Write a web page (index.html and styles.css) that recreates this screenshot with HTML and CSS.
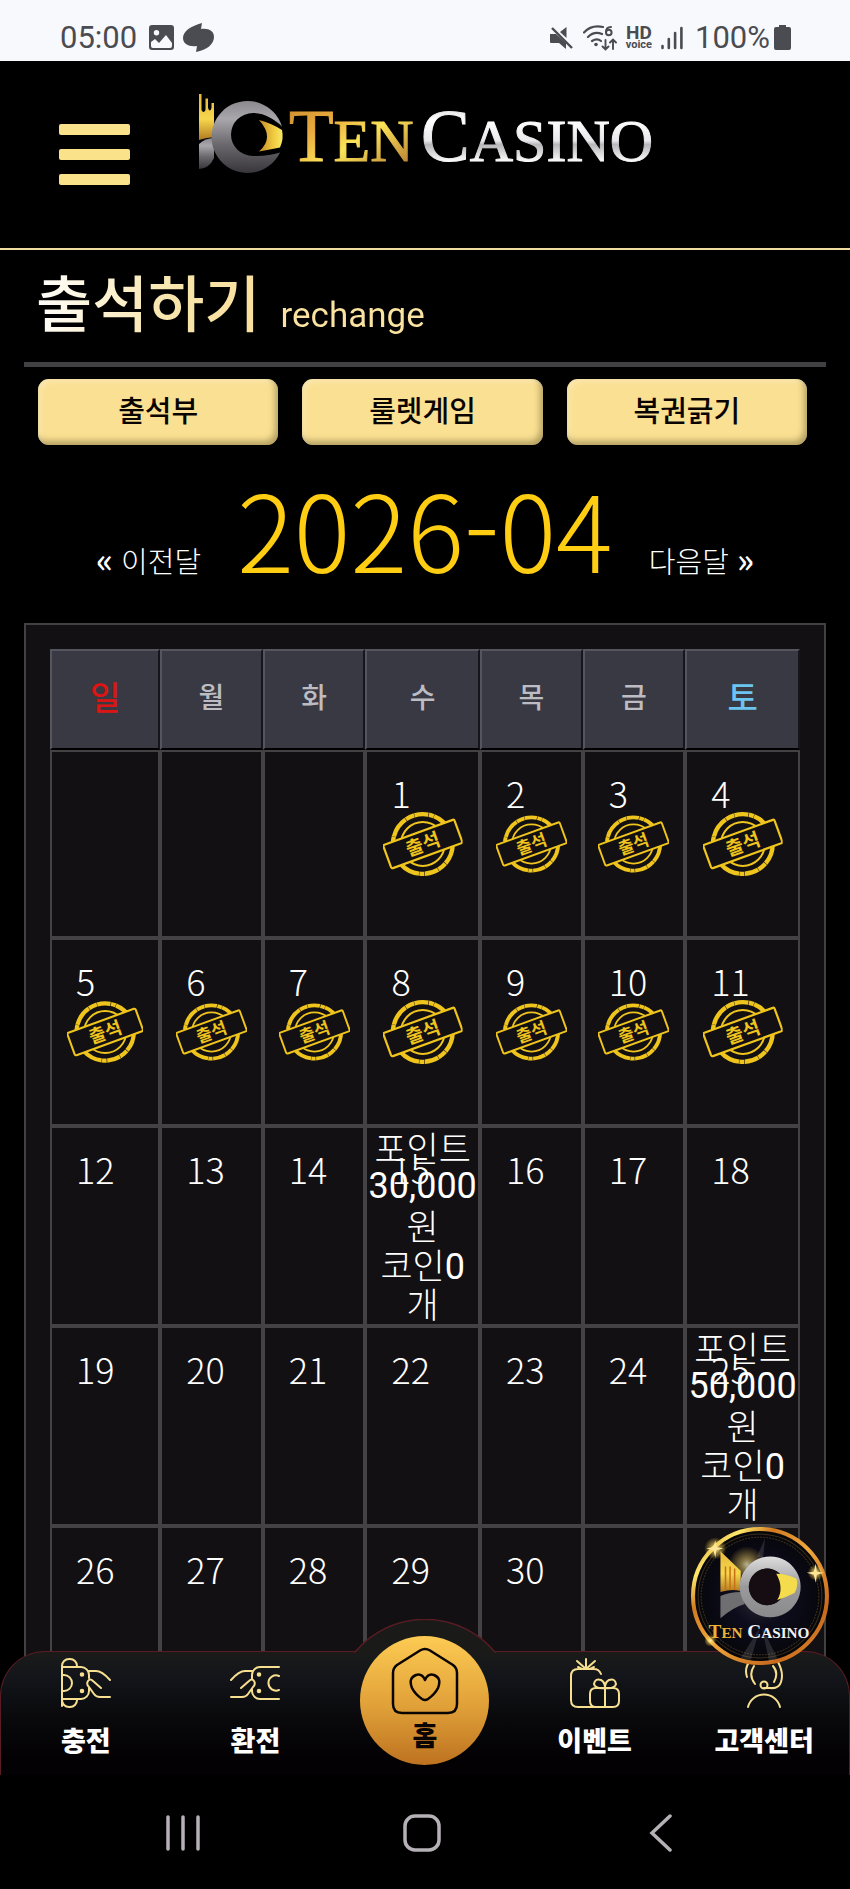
FILE: index.html
```html
<!DOCTYPE html>
<html lang="ko">
<head>
<meta charset="utf-8">
<meta name="viewport" content="width=device-width, initial-scale=1">
<title>출석하기 - Ten Casino</title>
<link rel="stylesheet" href="styles.css">
</head>
<body>
<svg class="defs" aria-hidden="true">
  <defs>
    <linearGradient id="gold" x1="0" y1="0" x2="1" y2="1">
      <stop offset="0" stop-color="#c98a2c"/><stop offset=".3" stop-color="#e9a93c"/><stop offset=".55" stop-color="#fbe458"/><stop offset="1" stop-color="#a8642a"/>
    </linearGradient>
    <linearGradient id="goldHand" x1="0" y1="0" x2="0" y2="1">
      <stop offset="0" stop-color="#e8b83c"/><stop offset=".55" stop-color="#f6d64c"/><stop offset="1" stop-color="#b07a22"/>
    </linearGradient>
    <linearGradient id="goldEye" x1="0" y1="0" x2="1" y2="0">
      <stop offset="0" stop-color="#c48a26"/><stop offset=".6" stop-color="#f0c840"/><stop offset="1" stop-color="#f8ea62"/>
    </linearGradient>
    <linearGradient id="silver" x1="0" y1="0" x2="0" y2="1">
      <stop offset="0" stop-color="#8b898d"/><stop offset=".25" stop-color="#a9a7ab"/><stop offset=".6" stop-color="#6b696e"/><stop offset="1" stop-color="#38363b"/>
    </linearGradient>
    <linearGradient id="steel" x1="0" y1="0" x2="0" y2="1">
      <stop offset="0" stop-color="#dededf"/><stop offset=".5" stop-color="#9a999b"/><stop offset="1" stop-color="#8a898b"/>
    </linearGradient>
    <linearGradient id="chrome" x1="0" y1="0" x2="0" y2="1">
      <stop offset="0" stop-color="#c4c4c8"/><stop offset=".3" stop-color="#ffffff"/><stop offset=".55" stop-color="#e9e9ec"/><stop offset=".6" stop-color="#b8b8bc"/><stop offset=".8" stop-color="#fafafa"/>
    </linearGradient>
    <linearGradient id="rim" x1="0" y1="0" x2="1" y2="1">
      <stop offset="0" stop-color="#c06a1a"/><stop offset=".18" stop-color="#ffe86a"/><stop offset=".3" stop-color="#d07a20"/><stop offset=".5" stop-color="#f0a83c"/><stop offset=".8" stop-color="#c8691c"/><stop offset="1" stop-color="#e89a38"/>
    </linearGradient>
    <radialGradient id="night">
      <stop offset="0" stop-color="#2a2a36"/><stop offset=".45" stop-color="#0d0c1c"/><stop offset="1" stop-color="#060609"/>
    </radialGradient>
    <radialGradient id="flare">
      <stop offset="0" stop-color="#fffbd0"/><stop offset=".3" stop-color="#ffe070" stop-opacity=".7"/><stop offset="1" stop-color="#ffd040" stop-opacity="0"/>
    </radialGradient>
  </defs>
  <symbol id="stamp" viewBox="0 0 80 64">
    <g fill="none" stroke="#eec41d">
      <circle cx="40" cy="32" r="30" stroke-width="4.400" stroke-dasharray="21 .5 9 .4 14 .6 5 .4"/>
      <circle cx="40" cy="32" r="22" stroke-width="2"/>
    </g>
    <g transform="rotate(-20 40 32)">
      <rect x="2" y="19.500" width="76" height="25" rx="1.500" class="stamp-plate" stroke="#eec41d" stroke-width="2.200"/>
      <text x="40" y="39" text-anchor="middle" class="stamp-text">출석</text>
    </g>
  </symbol>
</svg>
<div class="app">
  <div class="status">
    <div class="status-group status-left">
      <span class="clock">05:00</span>
      <svg class="status-image" viewBox="0 0 25 25"><path fill="#4a4c51" fill-rule="evenodd" d="M3 0h19a3 3 0 0 1 3 3v19a3 3 0 0 1-3 3H3a3 3 0 0 1-3-3V3a3 3 0 0 1 3-3zM2 17v4a2 2 0 0 0 2 2h17a2 2 0 0 0 2-2v-3l-6-8-7 8-4-4zM7.500 5a2.700 2.700 0 1 0 0 5.400 2.700 2.700 0 0 0 0-5.400z"/></svg>
      <svg class="status-swirl" viewBox="0 0 32 30"><path fill="#4a4c51" d="M19 0C8 3 0 8 0 15c0 6 6 9 14 8l-1 6c11-2 18-8 18-15 0-6-5-9-13-8z"/></svg>
    </div>
    <div class="status-group">
      <svg class="status-mute" viewBox="0 0 24 24"><g fill="#4a4c51"><path d="M0 8h6l10 9v6l-7-6H1a1 1 0 0 1-1-1z"/><path d="M10 6l6.500-5v11z"/></g><path d="M2 2l20 20" stroke="#4a4c51" stroke-width="2.400"/></svg>
      <svg class="status-wifi" viewBox="0 0 34 26"><g fill="none" stroke="#4a4c51" stroke-width="2.200" stroke-linecap="round"><path d="M1 7.500C6 2 13 .5 20 2M5 12c4-4 9-5 14-3M9 16c3-2 6-2.500 9 0"/><path d="M22.500 15v9M19.500 21.500l3 3 3-3M30 24v-9M27 17.500l3-3 3 3" stroke-width="1.900"/><path d="M28 2c-3 0-5 2-5 5" stroke-width="2"/><circle cx="25.800" cy="7.500" r="2.800" stroke-width="2"/></g><circle cx="13" cy="19.500" r="1.800" fill="#4a4c51"/></svg>
      <span class="hd"><b>HD</b><small>voice</small></span>
      <svg class="status-signal" viewBox="0 0 22 24"><g stroke="#4a4c51" stroke-width="2.600" stroke-linecap="round"><path d="M1.500 20v2M7.800 13v9M14.100 7v15M20.400 2v20"/></g></svg>
      <span class="percent">100%</span>
      <svg class="status-battery" viewBox="0 0 17 25"><path fill="#4a4c51" d="M5 0h7v2h3a2 2 0 0 1 2 2v19a2 2 0 0 1-2 2H2a2 2 0 0 1-2-2V4a2 2 0 0 1 2-2h3z"/></svg>
    </div>
  </div>

  <header class="header">
    <button class="menu" type="button" aria-label="메뉴"><span></span><span></span><span></span></button>
    <a class="logo" href="#" aria-label="Ten Casino">
      <svg viewBox="0 0 460 82">
        <path fill="url(#goldHand)" d="M1 1h2.500v16q2 4 4 0V5.500h2.500V15q2 5 3.500 0v-5H16v34q-9 1-15 3z"/>
        <path fill="url(#silver)" d="M1 51q6-6 15-6v20q-5 11-15 11z"/>
        <path fill="url(#silver)" fill-rule="evenodd" d="M84 33.500A36 36 0 1 0 82 59.500C74 62 65 63.500 55 63a22 21.500 0 0 1 0-43c12 0 22 7 29 13.500z"/>
        <path fill="url(#goldEye)" d="M61 27q12 3 23 10 2 9-2 17.500-10 2-21 4 16-14 0-31.500z"/>
        <text x="91" y="68" class="logo-text" fill="url(#gold)" stroke="url(#gold)">T<tspan class="logo-small">EN</tspan></text>
        <text x="223" y="68" class="logo-text" fill="url(#chrome)" stroke="url(#chrome)">C<tspan class="logo-small">ASINO</tspan></text>
      </svg>
    </a>
  </header>

  <main class="main">
    <h1 class="title"><span>출석하기</span><small>rechange</small></h1>
    <div class="actions">
      <button type="button">출석부</button>
      <button type="button">룰렛게임</button>
      <button type="button">복권긁기</button>
    </div>
    <div class="month">
      <a href="#"><b>«</b> 이전달</a>
      <h2>2026-04</h2>
      <a href="#">다음달 <b>»</b></a>
    </div>
    <section class="calendar">
      <table>
        <colgroup><col class="col-sun"><col class="col-day"><col class="col-day"><col class="col-wide"><col class="col-day"><col class="col-day"><col class="col-wide"></colgroup>
        <thead>
          <tr><th class="sun">일</th><th>월</th><th>화</th><th>수</th><th>목</th><th>금</th><th class="sat">토</th></tr>
        </thead>
        <tbody>
          <tr>
            <td></td><td></td><td></td>
            <td><span class="day">1</span><svg class="stamp"><use href="#stamp"/></svg></td>
            <td><span class="day">2</span><svg class="stamp"><use href="#stamp"/></svg></td>
            <td><span class="day">3</span><svg class="stamp"><use href="#stamp"/></svg></td>
            <td><span class="day">4</span><svg class="stamp"><use href="#stamp"/></svg></td>
          </tr>
          <tr>
            <td><span class="day">5</span><svg class="stamp"><use href="#stamp"/></svg></td>
            <td><span class="day">6</span><svg class="stamp"><use href="#stamp"/></svg></td>
            <td><span class="day">7</span><svg class="stamp"><use href="#stamp"/></svg></td>
            <td><span class="day">8</span><svg class="stamp"><use href="#stamp"/></svg></td>
            <td><span class="day">9</span><svg class="stamp"><use href="#stamp"/></svg></td>
            <td><span class="day">10</span><svg class="stamp"><use href="#stamp"/></svg></td>
            <td><span class="day">11</span><svg class="stamp"><use href="#stamp"/></svg></td>
          </tr>
          <tr class="tall">
            <td><span class="day">12</span></td><td><span class="day">13</span></td><td><span class="day">14</span></td>
            <td><span class="day">15</span><div class="reward"><span>포인트</span><b>30,000</b><span>원</span><span>코인<b>0</b></span><span>개</span></div></td>
            <td><span class="day">16</span></td><td><span class="day">17</span></td><td><span class="day">18</span></td>
          </tr>
          <tr class="tall">
            <td><span class="day">19</span></td><td><span class="day">20</span></td><td><span class="day">21</span></td><td><span class="day">22</span></td><td><span class="day">23</span></td><td><span class="day">24</span></td>
            <td><span class="day">25</span><div class="reward"><span>포인트</span><b>50,000</b><span>원</span><span>코인<b>0</b></span><span>개</span></div></td>
          </tr>
          <tr class="tall">
            <td><span class="day">26</span></td><td><span class="day">27</span></td><td><span class="day">28</span></td><td><span class="day">29</span></td><td><span class="day">30</span></td><td></td><td></td>
          </tr>
        </tbody>
      </table>
    </section>
  </main>

  <footer class="bottom">
    <nav class="tabs">
      <svg class="hump" viewBox="0 0 142 34"><path fill="#1a1b19" d="M0 34 1 33A91 91 0 0 1 141 33L142 34z"/><path fill="none" stroke="#5a1c24" stroke-width="1.500" d="M0 33.500 2 32A91 91 0 0 1 140 32L142 33.500"/></svg>
      <a href="#">
        <svg class="tab-icon" viewBox="0 0 50 50"><path d="M1 48V8a7 7 0 0 1 7-7h1a7 7 0 0 1 7 7v1M1 42a7 7 0 0 0 7 7h1a7 7 0 0 0 7-7v-1M1 9h19a8 8 0 0 1 8 8v3M28 30v3a8 8 0 0 1-8 8H1M1 17h2a8 8 0 0 1 0 16H1M27 13h8q6 0 14 9M40 30 32 23q-3-3-5 0-2 3 1 6l5 7q2 3 6 3h10"/><circle class="dot" cx="21" cy="16.500" r="1.300"/><circle class="dot" cx="21" cy="33" r="1.300"/></svg>
        <span>충전</span>
      </a>
      <a href="#">
        <svg class="tab-icon" viewBox="0 0 50 50"><path d="M49 9H30a8 8 0 0 0-8 8v4M22 31v2a8 8 0 0 0 8 8h19M49 18a7.600 7.600 0 1 0 0 14M23 13h-8Q9 13 1 22M11 30l8-7q3-3 5 0 2 3-1 6l-5 7q-2 3-6 3H1"/><circle class="dot" cx="29" cy="16.500" r="1.300"/><circle class="dot" cx="29" cy="33" r="1.300"/></svg>
        <span>환전</span>
      </a>
      <a class="home" href="#">
        <svg viewBox="0 0 68 68"><path d="M29 3.500 6 18q-4 3-4 8v31q0 9 9 9h46q9 0 9-9V26q0-5-4-8L39 3.500q-5-3-10 0zM34 33q-3-7-9-5-8 3-4 13 3 6 10 11 3 2 6 0 7-5 10-11 4-10-4-13-6-2-9 5z"/></svg>
        <span>홈</span>
      </a>
      <a href="#">
        <svg class="tab-icon" viewBox="0 0 50 50"><path d="M31 16q-2-5-7-5H8q-7 0-7 7v24q0 7 7 7h18M16 11V1M16 11 7 3M16 11l9-8M12 11l-4-2M20 11l4-2M26 30h17q6 0 6 6v7q0 6-6 6H26q-6 0-6-6v-7q0-6 6-6zM35 49V30q-10 1-11-4 1-6 7-4 4 2 4 8 0-6 4-8 6-2 7 4-1 5-11 4"/></svg>
        <span>이벤트</span>
      </a>
      <a href="#">
        <svg class="tab-icon" viewBox="0 0 50 50"><path d="M9 49a16.500 16.500 0 0 1 32 0M16 26Q9 17 15 8M35 24q5-9-1-16M8 19Q5 10 11 3M39 4q6 11 3 20-2 7-11 6h-6"/><circle cx="25" cy="27" r="3.500"/></svg>
        <span>고객센터</span>
      </a>
    </nav>
    <div class="system">
      <button type="button" aria-label="최근 앱"><svg viewBox="0 0 38 38"><path d="M4 3v32M19 3v32M34 3v32"/></svg></button>
      <button type="button" aria-label="홈 화면"><svg viewBox="0 0 38 38"><rect x="2" y="2" width="34" height="34" rx="10"/></svg></button>
      <button type="button" aria-label="뒤로"><svg viewBox="0 0 38 38"><path d="M28 2 10 19 28 36"/></svg></button>
    </div>
    <a class="float" href="#" aria-label="Ten Casino">
      <svg viewBox="0 0 138 138">
        <circle cx="69" cy="69" r="66" fill="url(#night)" stroke="url(#rim)" stroke-width="4"/>
        <g fill="none" stroke="#3c301c" stroke-width="1"><circle cx="69" cy="69" r="61"/><circle cx="69" cy="69" r="58" stroke-dasharray="2 1"/></g>
        <path fill="#ffffff" fill-opacity=".12" d="M66 30 74 12 72 32zM69 100 50 130 60 132zM71 100 78 134 86 130z"/>
        <circle cx="56" cy="38" r="18" fill="url(#flare)" opacity=".7"/>
        <path fill="url(#goldHand)" d="M30 25 50 44v20q-9-2-20 1z"/>
        <path d="M35 40v24M39.500 40v23M44 42v21" stroke="#c87018" stroke-width="1.500"/>
        <path fill="#6f6e70" d="M30 69q9-4 20-4l4 12Q43 80 30 91z"/>
        <path fill="url(#steel)" fill-rule="evenodd" d="M79 30a30 30 0 1 0 .1 0zM76 42a18 18 0 1 1-.1 0z"/>
        <circle cx="76" cy="60" r="18" fill="#160d12"/>
        <path fill="#f5dc4c" d="M85 47q10 0 20 5 2 8-2 14-8 4-17 7 7-12-1-26z"/>
        <circle cx="25" cy="22" r="11" fill="url(#flare)"/><circle cx="124" cy="46" r="8" fill="url(#flare)"/><circle cx="20" cy="113" r="6" fill="url(#flare)"/>
        <path fill="#ffe69a" d="M124 37l1 8 7 1-7 2-1 8-2-8-7-2 7-1zM25 14l1 7 7 1-7 2-1 7-2-7-7-2 7-1z"/>
        <text x="68" y="110" text-anchor="middle" class="float-text"><tspan fill="#e9b43a">T<tspan class="float-small">EN</tspan></tspan> <tspan fill="#f2f2f4">C<tspan class="float-small">ASINO</tspan></tspan></text>
      </svg>
    </a>
  </footer>
</div>
</body>
</html>
```
FILE: styles.css
```css
* { box-sizing: border-box; }
body {
  margin: 0;
  background: #000;
  color: #fff;
  font-family: "Noto Sans CJK KR", "Noto Sans", sans-serif;
}
a { color: inherit; text-decoration: none; }
button { border: 0; padding: 0; background: none; font: inherit; color: inherit; }
.defs { position: absolute; width: 0; height: 0; }
.app { display: flex; flex-direction: column; height: 100vh; overflow: hidden; }

.status {
  flex: none;
  display: flex;
  justify-content: space-between;
  height: 61px;
  padding: 14px 59px 0 60px;
  background: #f8f9fd;
  color: #4a4c51;
  font-family: Roboto, sans-serif;
  font-size: 31px;
}
.status-group { display: flex; align-items: center; height: 47px; gap: 9px; }
.status-left { gap: 9px; }
.clock { margin-right: 3px; }
.status-image { width: 25px; height: 25px; }
.status-swirl { width: 32px; height: 30px; }
.status-mute { width: 24px; height: 24px; }
.status-wifi { width: 34px; height: 26px; }
.status-signal { width: 22px; height: 24px; }
.status-battery { width: 17px; height: 25px; margin-left: -5px; }
.percent { margin-left: 3px; }
.hd { display: flex; flex-direction: column; align-items: center; line-height: 10px; }
.hd b { font-size: 19px; line-height: 14px; }
.hd small { font-size: 11px; font-weight: 700; }

.header {
  flex: none;
  display: flex;
  align-items: flex-start;
  height: 189px;
  padding: 32px 0 0 59px;
  border-bottom: 2px solid #f0dca0;
}
.menu { display: flex; flex-direction: column; gap: 14px; width: 71px; margin-top: 31px; }
.menu span { height: 11px; border-radius: 2px; background: #fae28b; }
.logo { margin-left: 68px; }
.logo svg { display: block; width: 460px; height: 82px; overflow: visible; }
.logo-text { font: 73px "Liberation Serif", serif; stroke-width: 1; }
.logo-small { font-size: 60px; }

.main { flex: 1; min-height: 0; overflow: hidden; padding: 0 24px; }
.title {
  display: flex;
  align-items: baseline;
  gap: 20px;
  height: 117px;
  margin: 0;
  padding: 14px 12px 0;
  border-bottom: 5px solid #414042;
  font-size: 61px;
  font-weight: 500;
  line-height: 74px;
}
.title span, .title small {
  background: linear-gradient(100deg, #fff, #f8e5ab 60%, #fadf9c);
  -webkit-background-clip: text;
  background-clip: text;
  color: transparent;
}
.title small { background: #fae2a0; -webkit-background-clip: text; background-clip: text; font-family: Roboto, sans-serif; font-size: 35px; font-weight: 400; line-height: 44px; }
.actions { display: grid; grid-template-columns: repeat(3, 1fr); gap: 24px; padding: 12px 19px 0 14px; }
.actions button {
  height: 66px;
  padding-bottom: 6px;
  border-radius: 11px;
  background: #fae092;
  box-shadow: inset -3px -4px 6px rgba(110, 95, 50, .5), inset 3px 3px 5px rgba(255, 240, 200, .6);
  color: #0a0400;
  font-size: 29px;
  font-weight: 500;
  line-height: 40px;
}
.month { display: flex; justify-content: center; align-items: baseline; gap: 36px; padding: 30px 0 43px; font-size: 29px; font-weight: 300; }
.month h2 { margin: 0; color: #ffcd12; font-size: 106px; font-weight: 300; line-height: 104px; }
.month a { line-height: 40px; }
.month b { font-size: 34px; font-weight: 500; line-height: 40px; }

.calendar { padding: 24px; border: 2px solid #414042; background: #121012; }
.calendar table { width: 100%; table-layout: fixed; border-collapse: separate; border-spacing: 0; }
.col-sun { width: 14.7%; }
.col-day { width: 13.7%; }
.col-wide { width: 15.3%; }
.calendar th {
  height: 101px;
  padding: 0 0 8px;
  border: 2px solid;
  border-color: #54555e #15161b #000 #54555e;
  background: #383942;
  color: #bcbcc2;
  font-size: 28px;
  font-weight: 500;
  line-height: 40px;
}
.calendar .sun { color: #dc1414; font-size: 33px; }
.calendar .sat { color: #6cc5f0; font-size: 33px; }
.calendar td { position: relative; height: 188px; padding: 0; border: 2px solid #444244; text-align: center; vertical-align: middle; }
.calendar .tall td { height: 200px; }
.day { position: absolute; top: 18px; left: 24px; font-size: 36px; font-weight: 300; line-height: 44px; }
.stamp { display: block; width: 72%; height: 66px; margin: 0 auto; }
.stamp-plate { fill: #121012; }
.stamp-text { fill: #eec41d; font: 700 19px "Noto Sans CJK KR", sans-serif; }
.reward { display: flex; flex-direction: column; align-items: center; font-size: 35px; font-weight: 300; }
.reward > * { height: 39px; line-height: 36px; white-space: nowrap; }
.reward b { font-family: Roboto, sans-serif; font-size: 36px; font-weight: 400; }

.bottom { flex: none; position: relative; margin-top: -45px; }
.tabs {
  position: relative;
  display: grid;
  grid-template-columns: repeat(5, 1fr);
  height: 124px;
  border: 1px solid #5a1c24;
  border-bottom: 0;
  border-radius: 45px 45px 0 0;
  background: linear-gradient(#1a1b19, #13151a 20%, #09090b 55%, #030103 85%);
}
.tabs a { display: flex; flex-direction: column; align-items: center; padding-top: 6px; font-size: 27px; font-weight: 900; line-height: 40px; white-space: nowrap; }
.tabs a svg { fill: none; stroke-linecap: round; stroke-linejoin: round; }
.tab-icon { width: 50px; height: 50px; margin-bottom: 12px; stroke: #f6df90; stroke-width: 2; }
.tab-icon .dot { fill: #f6df90; }
.hump { position: absolute; left: 50%; top: -33px; width: 142px; height: 34px; margin-left: -71px; }
.tabs .home {
  position: relative;
  justify-self: center;
  width: 129px;
  height: 129px;
  margin-top: -16px;
  padding-top: 11px;
  border-radius: 50%;
  background: linear-gradient(#fdcb53, #e0a038 55%, #bd7220);
  color: #0a0502;
}
.home svg { width: 68px; height: 68px; stroke: #0a0502; stroke-width: 2.5; }
.system { display: flex; justify-content: space-around; align-items: center; height: 114px; padding: 2px 70px 0 64px; background: #000; }
.system svg { display: block; width: 38px; height: 38px; fill: none; stroke: #b5b1b7; stroke-width: 3.5; stroke-linecap: round; }
.float { position: absolute; right: 20px; top: -125px; }
.float svg { display: block; width: 140px; height: 140px; }
.float-text { font: 700 19px "Liberation Serif", serif; }
.float-small { font-size: 15px; }
```
